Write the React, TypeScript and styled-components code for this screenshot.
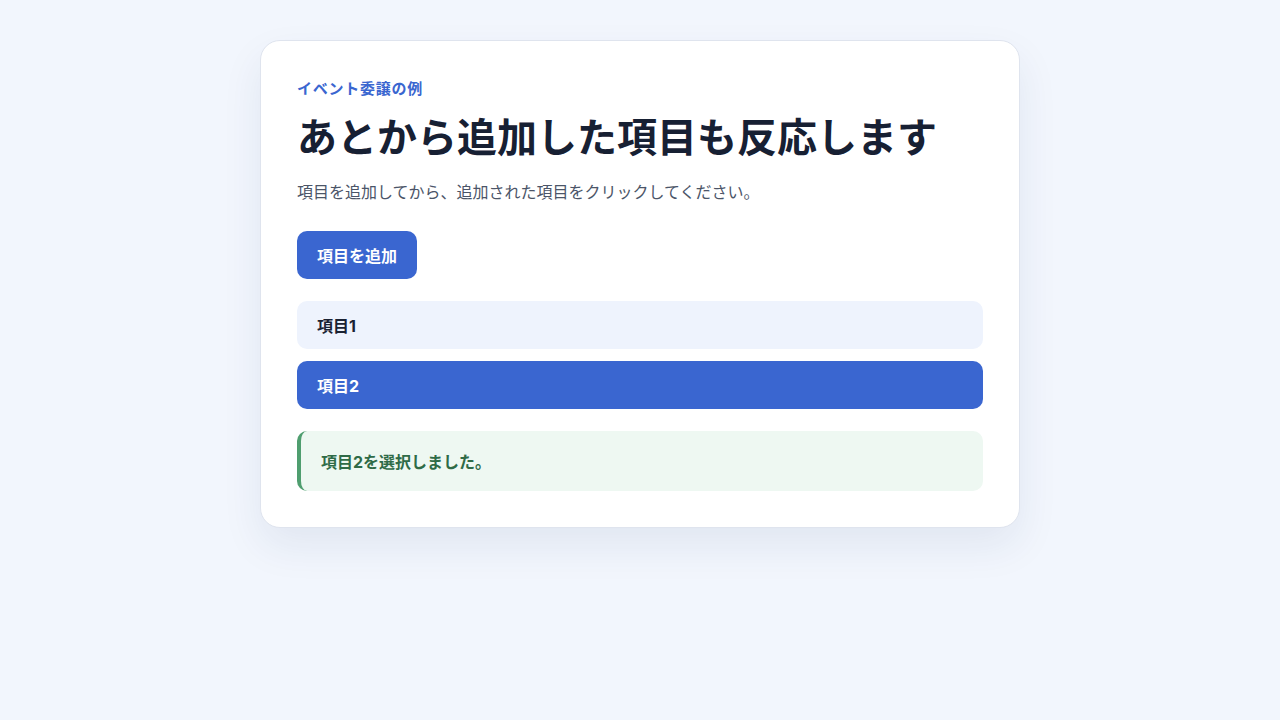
import React, { useState } from 'react';
import styled, { createGlobalStyle } from 'styled-components';

const GlobalStyle = createGlobalStyle`
  body {
    margin: 0;
    background: #f2f6fd;
    font-family: Inter, "Noto Sans CJK JP", sans-serif;
  }
`;

const Page = styled.div`
  display: flex;
  justify-content: center;
  padding: 40px 0;
  min-height: 100vh;
  box-sizing: border-box;
`;

const Card = styled.section`
  width: 760px;
  box-sizing: border-box;
  background: #ffffff;
  border: 1px solid #dfe4ee;
  border-radius: 20px;
  padding: 36px;
  box-shadow: 0 18px 40px rgba(30, 50, 100, 0.08);
  align-self: flex-start;
`;

const Eyebrow = styled.p`
  margin: 0;
  font-size: 15px;
  line-height: 23px;
  font-weight: 700;
  letter-spacing: 0.05em;
  color: #3a66d0;
`;

const Title = styled.h1`
  margin: 12px 0 0;
  font-size: 40px;
  line-height: 52px;
  font-weight: 700;
  color: #172033;
`;

const Lead = styled.p`
  margin: 16px 0 0;
  font-size: 16px;
  line-height: 25px;
  color: #4b5568;
`;

const AddButton = styled.button`
  margin-top: 26px;
  height: 48px;
  padding: 0 20px;
  border: none;
  border-radius: 10px;
  background: #3a66d0;
  color: #ffffff;
  font-family: inherit;
  font-size: 16px;
  font-weight: 700;
  cursor: pointer;
`;

const List = styled.div`
  margin-top: 22px;
  display: flex;
  flex-direction: column;
  gap: 12px;
`;

const Item = styled.button<{ $active: boolean }>`
  display: flex;
  align-items: center;
  height: 48px;
  padding: 0 20px;
  border: none;
  border-radius: 10px;
  background: ${(p) => (p.$active ? '#3a66d0' : '#eef3fd')};
  color: ${(p) => (p.$active ? '#ffffff' : '#1a2233')};
  font-family: inherit;
  font-size: 16px;
  font-weight: 700;
  text-align: left;
  cursor: pointer;
`;

const Result = styled.div`
  margin-top: 22px;
  display: flex;
  align-items: center;
  height: 60px;
  padding: 0 20px;
  border-left: 4px solid #4f9e6f;
  border-radius: 10px;
  background: #eef8f2;
  color: #2f6b47;
  font-size: 16px;
  font-weight: 700;
`;

export default function App() {
  const [items, setItems] = useState<string[]>(['項目1', '項目2']);
  const [selected, setSelected] = useState<string>('項目2');

  return (
    <>
      <GlobalStyle />
      <Page>
        <Card>
          <Eyebrow>イベント委譲の例</Eyebrow>
          <Title>あとから追加した項目も反応します</Title>
          <Lead>項目を追加してから、追加された項目をクリックしてください。</Lead>
          <AddButton onClick={() => setItems([...items, `項目${items.length + 1}`])}>
            項目を追加
          </AddButton>
          <List>
            {items.map((name) => (
              <Item key={name} $active={name === selected} onClick={() => setSelected(name)}>
                {name}
              </Item>
            ))}
          </List>
          <Result>{selected}を選択しました。</Result>
        </Card>
      </Page>
    </>
  );
}
